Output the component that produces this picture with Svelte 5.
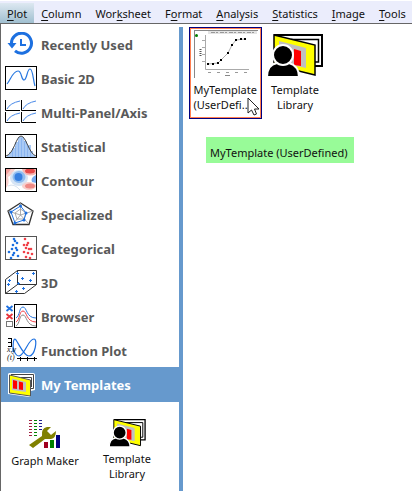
<script>
  const menus = [
    ['', 'P', 'lot'],
    ['', 'C', 'olumn'],
    ['Wor', 'k', 'sheet'],
    ['F', 'o', 'rmat'],
    ['', 'A', 'nalysis'],
    ['', 'S', 'tatistics'],
    ['', 'I', 'mage'],
    ['', 'T', 'ools']
  ];
  const categories = [
    'Recently Used', 'Basic 2D', 'Multi-Panel/Axis', 'Statistical', 'Contour', 'Specialized',
    'Categorical', '3D', 'Browser', 'Function Plot', 'My Templates'
  ];
  let selected = $state('My Templates');

  const blueDots = [[9, 3], [12, 7], [8, 9], [11, 12], [7, 13], [4, 16], [9, 17], [13, 20], [6, 22], [10, 5], [12, 14], [8, 19]];
  const redDots = [[20, 3], [23, 7], [19, 9], [21, 12], [26, 13], [19, 16], [23, 17], [27, 18], [21, 21], [25, 22], [22, 9], [24, 13]];
  const crosses = [[28.5, 3.5], [12.5, 3.5], [17.5, 8.5], [4.5, 10.5], [25.5, 10.5], [3.5, 14.5], [13.5, 13.5], [18.5, 18.5], [11.5, 21.5]];
  const samples = [[14, 34], [19, 34], [24, 33], [27, 30], [34, 23], [38, 15], [42, 10], [47, 9], [51, 9]];
</script>

{#snippet library()}
  <svg class="lib" viewBox="0 0 56 43" aria-hidden="true">
    <path d="M7 1H55V32H48" fill="#fff" stroke="#000" stroke-width="2" />
    <path d="M24 5.500H51.500V28H48" fill="none" stroke="#000" stroke-width="1.500" />
    <path d="M7 1L48 11V41L7 31Z" fill="#ff0" stroke="#000" stroke-width="1.500" />
    <path d="M12 7L39 14V34L12 28Z" fill="#c0c0c0" />
    <path d="M27 15L34 17V32L27 31Z" fill="red" />
    <path d="M0 43C0 34 4 30 10 29H22C29 31 32 36 32 43Z" fill="#000" stroke="#fff" stroke-width="2" />
    <circle cx="16" cy="21" r="10" fill="#000" stroke="#fff" stroke-width="2" />
  </svg>
{/snippet}

{#snippet icon(name)}
  <svg class="icon" viewBox="0 0 32 24" aria-hidden="true">
    {#if name === 'Recently Used'}
      <path d="M6.500 12A10 10 0 1 1 10 18.800" fill="none" stroke="#1d70e0" stroke-width="3" />
      <path d="M2.500 11H11.500L7 16.500Z" fill="#1d70e0" />
      <path d="M16 7V13H21" fill="none" stroke="#1d70e0" stroke-width="2" />
    {:else if name === 'Basic 2D'}
      <rect x=".5" y=".5" width="31" height="23" fill="#fff" stroke="#000" />
      <path d="M2 18C6 13 8 5 13 5C17 5 16 14 19 14C22 14 22 3 25 3C28 3 28 14 30 20" fill="none" stroke="#2878e0" stroke-width="1.200" />
    {:else if name === 'Multi-Panel/Axis'}
      {#each [[0, 0], [16, 0], [0, 12], [16, 12]] as [x, y]}
        <path d="M{x + 0.5} {y}V{y + 10.5}H{x + 15}" fill="none" stroke="#000" />
        <path d="M{x + 2} {y + 9}Q{x + 5} {y + 3} {x + 15} {y + 1}" fill="none" stroke="#4a8ae8" />
      {/each}
    {:else if name === 'Statistical'}
      <path d="M2 23V21H4V18H7V14H10V8H13V3H19V7H22V11H26V17H28V21H30V23Z" fill="#a9caf5" />
      <path d="M7.500 17V23M10.500 12V23M13.500 7V23M16.500 4V23M19.500 7V23M22.500 12V23M25.500 16V23" stroke="#8bb5f0" />
      <path d="M1 22C9 20 11 2 16 2S24 20 31 22" fill="none" stroke="#444" />
      <rect x=".5" y=".5" width="31" height="23" fill="none" stroke="#000" />
    {:else if name === 'Contour'}
      <rect width="32" height="24" fill="#fff" />
      <path d="M1 1H10Q8 6 3 9Q5 16 1 20Z" fill="#f8cfcc" />
      <path d="M1 1H6L3 5L1 7Z" fill="#f3a19d" />
      <ellipse cx="14" cy="10" rx="9" ry="8" fill="#d5e4f5" />
      <ellipse cx="14" cy="9" rx="6.500" ry="6" fill="#91bdf0" />
      <ellipse cx="13.500" cy="9" rx="4" ry="4" fill="#377fe0" />
      <path d="M17 1H31V6Q23 10 18 4Z" fill="#f6b6b3" />
      <ellipse cx="25" cy="3" rx="5" ry="2.500" fill="#e64b4b" />
      <path d="M31 7Q25 10 27 14L31 15Z" fill="#78aaf0" />
      <ellipse cx="24" cy="18" rx="7" ry="4" fill="#f8cfcc" />
      <ellipse cx="25" cy="18" rx="5" ry="2.500" fill="#ef8985" />
      <path d="M3 18Q9 15 15 22" fill="none" stroke="#d8e2ee" />
      <rect x=".5" y=".5" width="31" height="23" fill="none" stroke="#000" />
    {:else if name === 'Specialized'}
      <path d="M15.500 1L28 9L24 22.500H8L3 9Z" fill="#fff" stroke="#333" stroke-width="1.300" />
      <path d="M15.500 13V1M15.500 13L28 9M15.500 13L24 22M15.500 13L8 22M15.500 13L3 9M15.500 7L21 11L19 17H12L10 11Z" fill="none" stroke="#999" stroke-width=".8" />
      <path d="M15.500 4L21 11L19 18L10 21L6 10Z" fill="none" stroke="#1d70e0" />
      {#each [[15.5, 4], [21, 11], [19, 18], [10, 21], [6, 10]] as [x, y]}
        <circle cx={x} cy={y} r="1.500" fill="#1d70e0" />
      {/each}
    {:else if name === 'Categorical'}
      <rect x=".5" y=".5" width="31" height="23" fill="#fff" stroke="#555" />
      {#each blueDots as [x, y]}<circle cx={x} cy={y} r="1.300" fill="#1d70e0" />{/each}
      {#each redDots as [x, y]}<circle cx={x} cy={y} r="1.300" fill="#f04048" />{/each}
    {:else if name === '3D'}
      <path d="M12.500 .5H31.500V14.500H12.500ZM.5 9.500L12.500 .5V14.500L.5 23.500ZM.5 23.500H19.500L31.500 14.500" fill="none" stroke="#333" />
      {#each crosses as [x, y]}<path d="M{x - 1.5} {y}h3M{x} {y - 1.5}v3" stroke="#1d70e0" />{/each}
    {:else if name === 'Browser'}
      <path d="M1.500 2L7.500 7M7.500 2L1.500 7" stroke="#1d70e0" stroke-width="1.800" />
      <path d="M1.500 10L7.500 15M7.500 10L1.500 15" stroke="#e8343c" stroke-width="1.800" />
      <rect x="1.500" y="17.500" width="6" height="5" fill="#fff" stroke="#777" />
      <rect x="9.500" y=".5" width="22" height="23" fill="#fff" stroke="#000" />
      <path d="M11 14C15 12 14 3 18 3C22 3 21 14 31 14" fill="none" stroke="#2878e0" />
      <path d="M11 18C15 16 14 7 18 7C22 7 21 18 31 18" fill="none" stroke="#f04048" />
      <path d="M11 22C15 20 14 11 18 11C22 11 21 22 31 22" fill="none" stroke="#888" />
    {:else if name === 'Function Plot'}
      <path d="M3 .5H6M3 4.500H6M3 8.500H6M6.500 0V9" fill="none" stroke="#000" />
      <path d="M12 20.500H32M15.500 19V23M22.500 19V23M29.500 19V23" stroke="#000" />
      <path d="M8 14C8 1 9 0 11 2C15 8 19 18 24 18C30 18 33 1 29 1C23 1 20 17 14 18C11 18 9 14 8 8" fill="none" stroke="#1d70e0" stroke-width="1.200" />
      <text x="2" y="14" class="fn">x,y</text>
      <text x="2" y="22" class="fn">(t)</text>
    {:else}
      <path d="M4 0H28Q30 0 30 2V17L26 18V23L24 24L3 21V1Z" fill="#fff" />
      <path d="M6 1.500H28.500V15.500H26M16 4.500H26.500V14" fill="none" stroke="#444" />
      <path d="M4.500 2L25.500 7V23L4.500 20Z" fill="#ff0" stroke="#555" />
      <path d="M7 5.500L21 9V19L7 17Z" fill="#c0c0c0" />
      <path d="M8 7L12 8V16L8 15.500ZM14 8.500L18 9.500V17L14 16.500Z" fill="red" />
    {/if}
  </svg>
{/snippet}

<div class="app">
  <nav class="menubar" aria-label="Main menu">
    {#each menus as [before, key, after], i}
      <button class:active={i === 0}>{before}<u>{key}</u>{after}</button>
    {/each}
  </nav>
  <div class="popup">
    <aside>
      {#each categories as name}
        <button class="category" class:selected={selected === name} onclick={() => (selected = name)}>
          {@render icon(name)}<span>{name}</span>
        </button>
      {/each}
      <div class="shortcuts">
        <button class="tile">
          <svg class="maker" viewBox="0 0 32 30" aria-hidden="true">
            <path d="M0 1.500H3M0 4.500H3M0 7.500H3M0 10.500H3M0 13.500H3M0 16.500H3" stroke="#a02040" />
            <path d="M5 1.500H8M5 4.500H8M5 7.500H8M5 10.500H8M5 13.500H8M5 16.500H8" stroke="#008000" />
            <path d="M10 1.500H13M10 4.500H13M10 7.500H13M10 10.500H13" stroke="#202090" />
            <path d="M0 26L13 17Q12 9 18 8L22 8L18 12L22 16L27 12Q27 19 22 20L16 20L4 29Z" fill="#808000" />
            <rect x="15" y="23" width="4" height="6" fill="#a00020" />
            <rect x="21" y="21" width="4" height="8" fill="#008000" />
            <rect x="27" y="16" width="4" height="13" fill="#000080" />
          </svg>
          <span>Graph Maker</span>
        </button>
        <button class="tile">{@render library()}<span>Template<br />Library</span></button>
      </div>
    </aside>
    <main>
      <button class="template hovered" aria-describedby="tip">
        <svg class="preview" viewBox="0 0 64 48" aria-hidden="true">
          <path d="M.5 0V48M0 .5H64" stroke="#888" />
          <rect x="14" y="1" width="49" height="3" fill="#e4e4e4" />
          <path d="M17 2.500H61" stroke="#999" stroke-dasharray="4 1 2 2" />
          <circle cx="2.500" cy="5.500" r="1.500" fill="#008000" />
          <path d="M11.500 5V39.500H55M10 10.500H12M10 17.500H12M10 24.500H12M10 31.500H12" fill="none" stroke="#aaa" />
          <path d="M14 34L24 33L28 29L34 23L38 15L42 10L51 9" fill="none" stroke="#999" stroke-width=".8" />
          {#each samples as [x, y]}<rect x={x - 1} y={y - 1} width="2" height="2" fill="#000" />{/each}
          <path d="M6.500 19V26" stroke="#555" stroke-dasharray="1 1" stroke-width="2" />
          <path d="M9 10V37" stroke="#aaa" stroke-dasharray="1 6" stroke-width="2" />
          <path d="M14 42.500H54" stroke="#999" stroke-dasharray="3 6" />
          <path d="M31 45.500H36" stroke="#888" />
        </svg>
        <span class="name">MyTemplate<br />(UserDefi...</span>
        <svg class="pointer" viewBox="0 0 13 19" aria-hidden="true">
          <path d="M1 1V16L4.500 13L7 18L9.500 17L7.500 12H12Z" fill="#fff" stroke="#222" />
        </svg>
      </button>
      <button class="template">{@render library()}<span class="name">Template<br />Library</span></button>
      <div class="tooltip" id="tip" role="tooltip">MyTemplate (UserDefined)</div>
    </main>
  </div>
</div>

<style>
  :global(body) { margin: 0; background: #fff; }
  .app { display: flex; flex-direction: column; min-height: 100vh; overflow: hidden; font: 11px/15px "Noto Sans", sans-serif; color: #111; }
  button { border: 0; padding: 0; margin: 0; background: none; font: inherit; color: inherit; }
  svg { display: block; flex: none; }
  .menubar { display: flex; align-items: stretch; height: 20px; padding: 3px 0 0; background: linear-gradient(#fff 1px, #ebedfc 1px); border-bottom: 1px solid #666; white-space: nowrap; }
  .menubar button { padding: 0 7px; }
  .menubar .active { background: linear-gradient(#dde8f1, #a0bfd0); }
  u { text-underline-offset: 2px; }
  .popup { display: flex; flex: 1; border-left: 1px solid #666; }
  aside { display: flex; flex-direction: column; width: 178px; margin-top: 3px; flex: none; border-right: 4px solid #6699cd; }
  .category { display: flex; align-items: center; gap: 4px; height: 34px; padding-left: 4px; color: #595959; font-size: 13px; font-weight: 700; text-align: left; }
  .category span { padding-top: 2px; }
  .selected { height: 35px; background: #6699cd; color: #fff; }
  .icon { width: 32px; height: 24px; }
  .fn { font: italic 8px "Liberation Serif", serif; fill: #222; }
  .shortcuts { display: flex; padding: 17px 11px 0 3px; }
  .tile { display: flex; flex: 1; flex-direction: column; align-items: center; justify-content: flex-start; gap: 4px; }
  .tile .lib { width: 37px; height: 28px; }
  .maker { width: 32px; height: 30px; }
  main { position: relative; display: flex; flex: 1; align-items: flex-start; gap: 1px; padding: 3px 0 0 6px; }
  .template { position: relative; display: flex; flex-direction: column; align-items: center; box-sizing: border-box; width: 64px; height: 92px; padding-top: 6px; }
  .hovered { width: 73px; padding-top: 1px; border: 1px solid #000080; outline: 1px solid #ff7f50; outline-offset: -2px; }
  .lib { width: 56px; height: 43px; }
  .preview { width: 64px; height: 48px; margin-top: 1px; }
  .name { width: 64px; margin-top: 4px; white-space: nowrap; }
  .hovered .name { text-align: left; }
  .template .lib { margin: 1px 0; }
  .pointer { position: absolute; right: 1px; bottom: 2px; width: 13px; height: 19px; }
  .tooltip { position: absolute; top: 113px; left: 23px; padding: 8px 6px 3px 4px; background: #98fb98; white-space: nowrap; }
</style>
